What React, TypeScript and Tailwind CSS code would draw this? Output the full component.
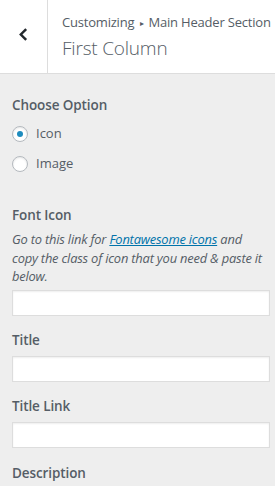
import React, { useState } from 'react';

const font = { fontFamily: '"Open Sans", "Noto Sans", sans-serif' };

const labelCls = 'text-[13.5px] font-semibold leading-[20px] text-[#555d66] tracking-[-0.1px]';
const inputCls =
  'block h-[26px] w-[258px] border border-[#dddddd] bg-white shadow-[inset_0_1px_2px_rgba(0,0,0,0.07)] outline-none';

const Field = ({ label }: { label: string }) => (
  <div className="mt-[14px]">
    <div className={labelCls}>{label}</div>
    <input type="text" className={`mt-[6px] ${inputCls}`} />
  </div>
);

const App = () => {
  const [choice, setChoice] = useState('icon');

  return (
    <div className="h-[486px] w-[275px] overflow-hidden bg-[#eeeeee]" style={font}>
      {/* header */}
      <div className="flex h-[74px] border-b border-[#dddddd] bg-white">
        <button className="flex w-[48px] items-center justify-center border-r border-[#dddddd] pb-[4px]">
          <svg width="11" height="15" viewBox="0 0 10 14">
            <path d="M7.5 2 L2.5 7 L7.5 12" fill="none" stroke="#23282d" strokeWidth="2.3" />
          </svg>
        </button>
        <div className="pl-[14px] pt-[13px]">
          <div className="text-[13px] leading-[18px] text-[#555d66] tracking-[-0.2px]">
            Customizing <span className="mx-[2px] text-[8px] align-[1px]">▸</span> Main Header Section
          </div>
          <div className="mt-[3px] text-[19px] font-light leading-[26px] text-[#555d66] tracking-[-0.2px]">
            First Column
          </div>
        </div>
      </div>

      <div className="px-[12px] pt-[21px]">
        <div className={labelCls}>Choose Option</div>
        <div className="mt-[8px] flex flex-col gap-[9px]">
          {[
            ['icon', 'Icon'],
            ['image', 'Image'],
          ].map(([v, l]) => (
            <label key={v} className="flex h-[21px] items-center gap-[8px] text-[13px] text-[#555d66]">
              <span
                onClick={() => setChoice(v)}
                className="flex h-[16px] w-[16px] items-center justify-center rounded-full border border-[#b4b9be] bg-white shadow-[inset_0_1px_2px_rgba(0,0,0,0.1)]"
              >
                {choice === v && <span className="h-[6px] w-[6px] rounded-full bg-[#1e8cbe]" />}
              </span>
              {l}
            </label>
          ))}
        </div>

        <div className={`mt-[31px] ${labelCls}`}>Font Icon</div>
        <p className="mt-[5px] text-[12.9px] italic leading-[18.5px] text-[#555d66] tracking-[-0.2px]">
          Go to this link for{' '}
          <a href="#" className="text-[#0073aa] underline">
            Fontawesome icons
          </a>{' '}
          and copy the class of icon that you need &amp; paste it below.
        </p>
        <input type="text" className={`mt-[4px] ${inputCls}`} />

        <Field label="Title" />
        <Field label="Title Link" />
        <div className={`mt-[15px] ${labelCls}`}>Description</div>
      </div>
    </div>
  );
};

export default App;
